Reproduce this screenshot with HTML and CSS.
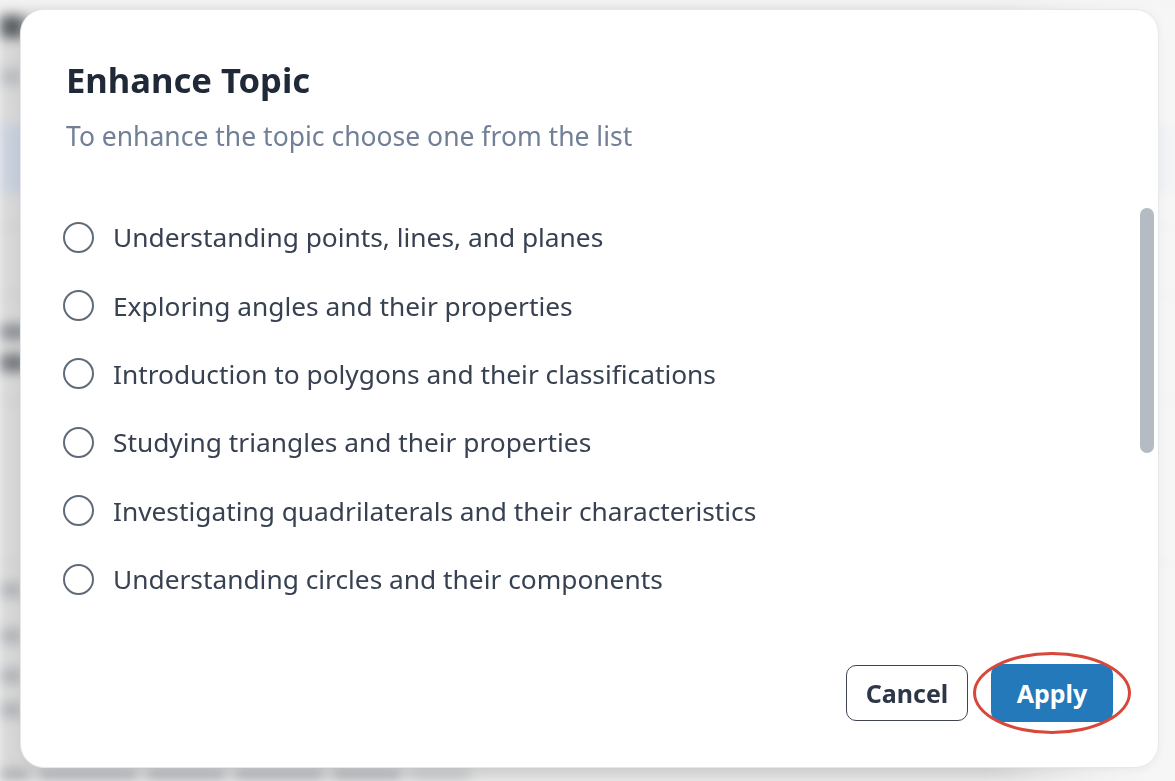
FILE: index.html
```html
<!DOCTYPE html>
<html lang="en">
<head>
<meta charset="utf-8">
<title>Enhance Topic</title>
<link rel="stylesheet" href="styles.css">
</head>
<body>
<div class="backdrop" aria-hidden="true">
  <div class="bg-page">
    <div class="bg-top"></div>
    <div class="bg-block bg-heading"></div>
    <div class="bg-block bg-sub"></div>
    <div class="bg-band"></div>
    <div class="bg-line l1"></div>
    <div class="bg-line l2"></div>
    <div class="bg-block bg-bold b1"></div>
    <div class="bg-block bg-bold b2"></div>
    <div class="bg-line l3"></div>
    <div class="bg-line l4"></div>
    <div class="bg-block bg-text t1"></div>
    <div class="bg-block bg-text t2"></div>
    <div class="bg-block bg-text t3"></div>
    <div class="bg-block bg-text t4"></div>
    <div class="bg-foot">
      <span class="fw w1"></span><span class="fw w2"></span><span class="fw w3"></span><span class="fw w4"></span><span class="fw w5"></span><span class="fw w6"></span>
    </div>
  </div>
  <div class="bg-fade"></div>
</div>

<div class="overlay">
  <div class="modal" role="dialog" aria-labelledby="modal-title">
    <h2 class="modal-title" id="modal-title">Enhance Topic</h2>
    <p class="modal-subtitle">To enhance the topic choose one from the list</p>

    <div class="list-wrap">
      <div class="topic-list">
        <label class="topic"><span class="radio"></span><span class="topic-text">Understanding points, lines, and planes</span></label>
        <label class="topic"><span class="radio"></span><span class="topic-text">Exploring angles and their properties</span></label>
        <label class="topic"><span class="radio"></span><span class="topic-text">Introduction to polygons and their classifications</span></label>
        <label class="topic"><span class="radio"></span><span class="topic-text">Studying triangles and their properties</span></label>
        <label class="topic"><span class="radio"></span><span class="topic-text">Investigating quadrilaterals and their characteristics</span></label>
        <label class="topic"><span class="radio"></span><span class="topic-text">Understanding circles and their components</span></label>
      </div>
      <span class="scroll-thumb"></span>
    </div>

    <div class="modal-footer">
      <button class="btn btn-cancel" type="button">Cancel</button>
      <span class="apply-wrap">
        <button class="btn btn-apply" type="button">Apply</button>
        <span class="highlight-ring"></span>
      </span>
    </div>
  </div>
</div>
</body>
</html>
```

FILE: styles.css
```css
* { box-sizing: border-box; }

html, body {
  margin: 0;
  height: 100%;
  overflow: hidden;
}

body {
  font-family: "Noto Sans", "Open Sans", "DejaVu Sans", sans-serif;
  background: #f2f2f2;
}

/* ---------- blurred page behind the dialog ---------- */
.backdrop {
  position: fixed;
  inset: 0;
  overflow: hidden;
}

.bg-page {
  height: 100%;
  display: flex;
  flex-direction: column;
  background: linear-gradient(90deg, #d6d6d6 0%, #d6d6d6 84%, #f3f3f3 97%, #f7f7f7 100%);
  filter: blur(6px);
}

.bg-top {
  height: 10px;
  background: #f2f2f2;
  flex: none;
}

.bg-block {
  flex: none;
  border-radius: 4px;
}

.bg-heading {
  margin-top: 6px;
  width: 24px;
  height: 22px;
  background: #5b5f64;
}

.bg-sub {
  margin-top: 30px;
  width: 22px;
  height: 18px;
  background: #b9bcc0;
}

.bg-band {
  flex: none;
  margin-top: 38px;
  height: 70px;
  background: linear-gradient(90deg, #c7cedb 0%, #cdd3de 85%, #e2e7f1 100%);
}

.bg-line {
  flex: none;
  height: 2px;
  background: #c4c4c4;
}
.l1 { margin-top: 32px; }
.l2 { margin-top: 66px; }
.l3 { margin-top: 28px; }
.l4 { margin-top: 160px; }

.bg-bold {
  width: 26px;
  height: 16px;
  background: #8a8e94;
}
.b1 { margin-top: 28px; }
.b2 { margin-top: 14px; background: #74787e; height: 18px; }

.bg-text {
  width: 22px;
  height: 16px;
  background: #b0b3b7;
}
.t1 { margin-top: 18px; }
.t2 { margin-top: 30px; }
.t3 { margin-top: 24px; }
.t4 { margin-top: 18px; }

.bg-foot {
  flex: none;
  margin-top: auto;
  height: 12px;
  display: flex;
  gap: 8px;
}

.fw {
  height: 12px;
  background: #a9adb1;
  border-radius: 3px;
}
.w1 { width: 30px; }
.w2 { width: 100px; }
.w3 { width: 80px; }
.w4 { width: 90px; }
.w5 { width: 70px; }
.w6 { width: 60px; background: #bbbec1; }

.bg-fade {
  position: absolute;
  inset: 0;
  background: linear-gradient(90deg, rgba(246,246,246,0) 0%, rgba(246,246,246,0) 86%, rgba(246,246,246,0.75) 98%);
}

/* ---------- dialog ---------- */
.overlay {
  position: fixed;
  inset: 0;
  padding: 9px 16px 13px 20px;
  display: flex;
}

.modal {
  flex: 1;
  display: flex;
  flex-direction: column;
  background: #ffffff;
  border: 1px solid #e7e8ea;
  border-radius: 24px;
  padding: 45px;
  box-shadow: 0 2px 10px rgba(0, 0, 0, 0.05);
  min-height: 0;
}

.modal-title {
  margin: 3px 0 0;
  font-size: 34.6px;
  line-height: 44px;
  font-weight: 700;
  color: #1f2937;
}

.modal-subtitle {
  margin: 17px 0 0;
  font-size: 26.5px;
  line-height: 34px;
  color: #718096;
}

.list-wrap {
  position: relative;
  margin-top: 50px;
  margin-right: -41px;
  margin-left: -4px;
  flex: none;
}

.topic-list {
  height: 410px;
  padding-left: 1px;
  overflow: hidden;
}

.scroll-thumb {
  position: absolute;
  right: 0;
  top: 5px;
  width: 14px;
  height: 245px;
  background: #b4bbc2;
  border-radius: 7px;
}

.topic {
  display: flex;
  align-items: center;
  gap: 19px;
  height: 68.4px;
  cursor: pointer;
}

.radio {
  flex: none;
  width: 31px;
  height: 31px;
  border: 2px solid #5f6b78;
  border-radius: 50%;
  background: #fff;
}

.topic-text {
  font-size: 26.3px;
  line-height: 34px;
  color: #374151;
  white-space: nowrap;
}

.modal-footer {
  margin-top: auto;
  display: flex;
  justify-content: flex-end;
  align-items: center;
  gap: 23px;
}

.btn {
  font-family: "Noto Sans", "Open Sans", "DejaVu Sans", sans-serif;
  font-size: 25px;
  font-weight: 700;
  width: 122px;
  border-radius: 10px;
  cursor: pointer;
  padding: 0;
}

.btn-cancel {
  height: 56px;
  background: #ffffff;
  color: #2d3748;
  border: 1.5px solid #3f4550;
}

.apply-wrap {
  position: relative;
  display: flex;
}

.btn-apply {
  height: 58px;
  background: #2379ba;
  color: #ffffff;
  border: none;
}

.highlight-ring {
  position: absolute;
  left: -18px;
  top: -12px;
  right: -18px;
  bottom: -12px;
  border: 3px solid #d8473a;
  border-radius: 50%;
  pointer-events: none;
}
```
